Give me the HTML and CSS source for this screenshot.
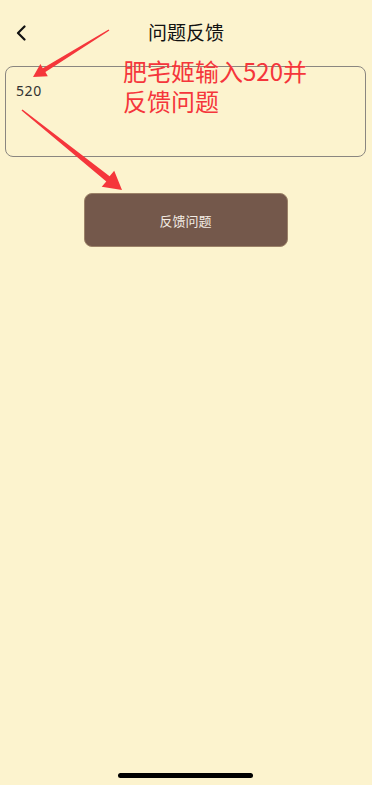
FILE: index.html
```html
<!DOCTYPE html>
<html lang="zh">
<head>
<meta charset="utf-8">
<meta name="viewport" content="width=device-width, initial-scale=1">
<link rel="stylesheet" href="styles.css">
<title>问题反馈</title>
</head>
<body>
<div class="screen">
  <header class="nav">
    <button class="back" aria-label="返回">
      <svg width="12" height="16" viewBox="0 0 12 16"><path d="M9.5 1.5 L3 8 L9.5 14.5" fill="none" stroke="#111" stroke-width="2.2" stroke-linecap="round" stroke-linejoin="round"/></svg>
    </button>
    <h1 class="title">问题反馈</h1>
  </header>
  <div class="field">
    <div class="field-text">520</div>
  </div>
  <div class="actions">
    <button class="submit">反馈问题</button>
  </div>
  <div class="note">肥宅姬输入520并<br>反馈问题</div>
  <svg class="arrows" width="372" height="260" viewBox="0 0 372 260">
    <polygon points="109.4,30.6 45.4,72 47.8,76.3 33,77 40.4,64 42.8,68.2 108.6,29.4" fill="#f5363b"/>
    <polygon points="21.5,110.6 106.3,181.4 101.7,186.8 122,190 114.2,170.8 109.6,176.2 22.5,109.4" fill="#f5363b"/>
  </svg>
  <div class="home-indicator"></div>
</div>
</body>
</html>
```
FILE: styles.css
```css
html, body {
  margin: 0;
  padding: 0;
  background: #fcf3ce;
}
body {
  font-family: "Noto Sans CJK SC", "Noto Sans", sans-serif;
}
.screen {
  position: relative;
  width: 372px;
  height: 785px;
  background: #fcf3ce;
  overflow: hidden;
  display: flex;
  flex-direction: column;
}
.nav {
  height: 66px;
  display: flex;
  align-items: flex-start;
  justify-content: center;
  position: relative;
  box-sizing: border-box;
  padding-top: 18px;
}
.back {
  position: absolute;
  left: 14px;
  top: 25px;
  border: 0;
  background: none;
  padding: 0;
  width: 14px;
  height: 16px;
}
.title {
  margin: 0;
  font-size: 19px;
  font-weight: 400;
  line-height: 28px;
  color: #111;
}
.field {
  margin: 0 6px 0 5px;
  height: 91px;
  border: 1px solid #8a8680;
  border-radius: 8px;
  box-sizing: border-box;
  padding: 13px 10px;
}
.field-text {
  font-family: "Noto Sans", sans-serif;
  font-size: 14px;
  line-height: 22px;
  color: #333;
  letter-spacing: 0.6px;
}
.actions {
  display: flex;
  justify-content: center;
  padding-top: 36px;
}
.submit {
  width: 204px;
  height: 54px;
  background: #74584b;
  border: 1px solid #9c8268;
  border-radius: 8px;
  color: #f3ece4;
  font-family: "Noto Sans CJK SC", sans-serif;
  font-size: 13px;
  margin-right: 1px;
}
.note {
  position: absolute;
  left: 123px;
  top: 56px;
  font-size: 24px;
  line-height: 30px;
  color: #f5363b;
  font-family: "Noto Sans CJK SC", "Noto Sans", sans-serif;
}
.arrows {
  position: absolute;
  left: 0;
  top: 0;
}
.home-indicator {
  position: absolute;
  left: 118px;
  top: 773px;
  width: 135px;
  height: 5px;
  border-radius: 3px;
  background: #000;
}
```
